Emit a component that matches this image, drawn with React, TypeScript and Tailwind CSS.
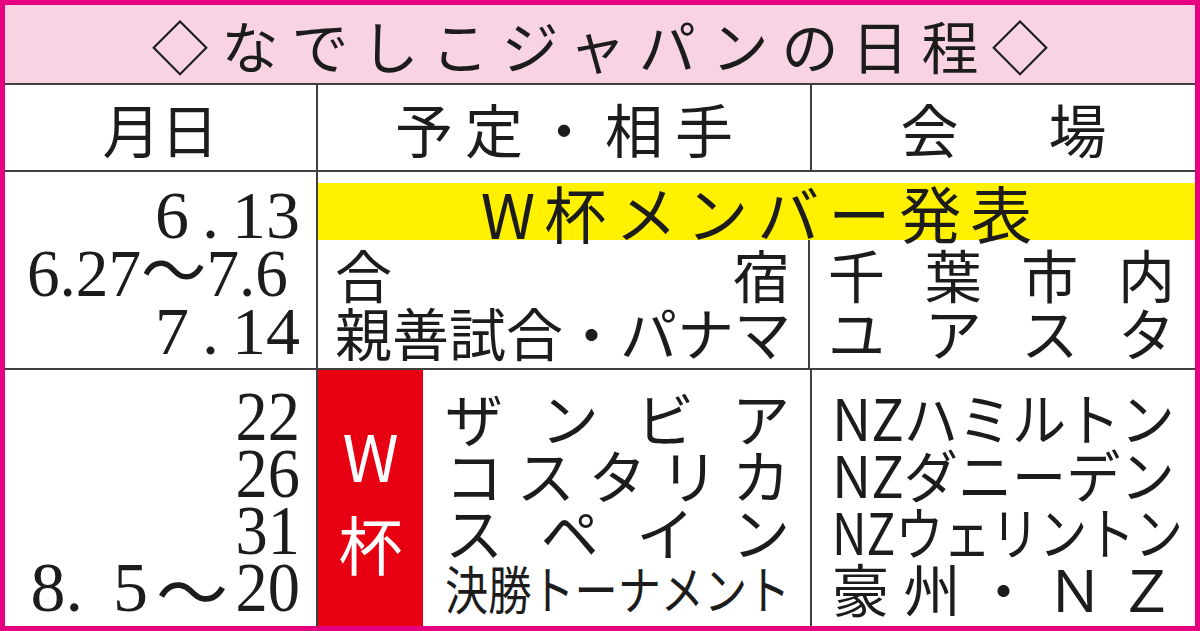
const jp = "font-['Noto_Sans_CJK_JP',sans-serif]";
const num = "font-['Liberation_Serif','Noto_Sans_CJK_JP',serif]";

function Spread({ text, className = "" }: { text: string; className?: string }) {
  return (
    <div className={"flex justify-between " + className}>
      {Array.from(text).map((c, i) => (
        <span key={i}>{c}</span>
      ))}
    </div>
  );
}

function Squeeze({ text, className = "" }: { text: string; className?: string }) {
  return (
    <div className="h-[57px] flex items-center whitespace-nowrap">
      <span className={"inline-block origin-left " + className}>{text}</span>
    </div>
  );
}

export default function App() {
  return (
    <div
      className={
        "w-[1200px] h-[631px] border-[5px] border-[#e4007f] bg-white flex flex-col text-[#1c1c1c] leading-none overflow-hidden " +
        jp
      }
    >
      {/* title */}
      <div className="h-[80px] shrink-0 bg-[#f8d3e3] border-b-2 border-[#404040] flex items-center justify-center text-[57px] tracking-[13px] pl-[13px]">
        ◇なでしこジャパンの日程◇
      </div>

      {/* header */}
      <div className="h-[87px] shrink-0 grid grid-cols-[313px_494px_minmax(0,1fr)] border-b-2 border-[#404040] text-[58px]">
        <div className="border-r-2 border-[#404040] flex items-center justify-center">月日</div>
        <div className="border-r-2 border-[#404040] flex items-center justify-center tracking-[12px] pl-[12px]">
          予定・相手
        </div>
        <div className="flex items-center justify-center gap-[90px]">
          <span>会</span>
          <span>場</span>
        </div>
      </div>

      {/* June / July */}
      <div className="h-[198px] shrink-0 grid grid-cols-[313px_minmax(0,1fr)] border-b-2 border-[#404040]">
        <div className={"border-r-2 border-[#404040] pt-[14px] text-[68px] " + num}>
          <div className="h-[58px] flex items-center justify-end pr-[16px]">
            <span>6</span>
            <span className="mx-[13px]">.</span>
            <span>13</span>
          </div>
          <div className="h-[58px] flex items-center justify-end pr-[28px]">
            <span className="inline-block origin-right scale-x-[0.96]">6.27～7.6</span>
          </div>
          <div className="h-[58px] flex items-center justify-end pr-[16px]">
            <span>7</span>
            <span className="mx-[13px]">.</span>
            <span>14</span>
          </div>
        </div>
        <div className="flex flex-col">
          <div className="mt-[11px] h-[57px] bg-[#fff100] flex items-center justify-center text-[62px] tracking-[9px] pl-[9px]">
            W杯メンバー発表
          </div>
          <div className="flex-1 grid grid-cols-[492px_minmax(0,1fr)] text-[57px]">
            <div className="border-r-2 border-[#404040] pt-[4px] pl-[17px] pr-[18px]">
              <div className="h-[58px] flex items-center justify-between">
                <span>合</span>
                <span>宿</span>
              </div>
              <Spread text="親善試合・パナマ" className="h-[58px] items-center" />
            </div>
            <div className="pt-[4px] pl-[18px] pr-[20px]">
              <Spread text="千葉市内" className="h-[58px] items-center" />
              <Spread text="ユアスタ" className="h-[58px] items-center" />
            </div>
          </div>
        </div>
      </div>

      {/* World Cup */}
      <div className="flex-1 min-h-0 grid grid-cols-[313px_105px_389px_minmax(0,1fr)]">
        <div className={"border-r-2 border-[#404040] pt-[18px] pr-[16px] text-[70px] " + num}>
          <div className="h-[57px] flex items-center justify-end">
            <span className="inline-block origin-right scale-x-[0.92]">22</span>
          </div>
          <div className="h-[57px] flex items-center justify-end">
            <span className="inline-block origin-right scale-x-[0.92]">26</span>
          </div>
          <div className="h-[57px] flex items-center justify-end">
            <span className="inline-block origin-right scale-x-[0.92]">31</span>
          </div>
          <div className="h-[57px] flex items-center justify-end">
            <span>8.</span>
            <span className="ml-[30px]">5</span>
            <span className={"ml-[8px] mr-[2px] text-[72px] " + jp}>～</span>
            <span className="inline-block origin-right scale-x-[0.92]">20</span>
          </div>
        </div>
        <div className="bg-[#e60012] text-white flex flex-col items-center justify-center gap-[24px] text-[64px]">
          <span>W</span>
          <span>杯</span>
        </div>
        <div className="min-w-0 border-r-2 border-[#404040] pt-[18px] pl-[22px] pr-[20px] text-[58px]">
          <Spread text="ザンビア" className="h-[57px] items-center" />
          <Spread text="コスタリカ" className="h-[57px] items-center" />
          <Spread text="スペイン" className="h-[57px] items-center" />
          <Squeeze text="決勝トーナメント" className="text-[52px] scale-x-[0.83]" />
        </div>
        <div className="min-w-0 pt-[18px] pl-[20px] pr-[20px] text-[57px]">
          <Squeeze text="NZハミルトン" className="scale-x-[0.95]" />
          <Squeeze text="NZダニーデン" className="scale-x-[0.95]" />
          <Squeeze text="NZウェリントン" className="scale-x-[0.84]" />
          <Spread text="豪州・ＮＺ" className="h-[57px] items-center" />
        </div>
      </div>
    </div>
  );
}
